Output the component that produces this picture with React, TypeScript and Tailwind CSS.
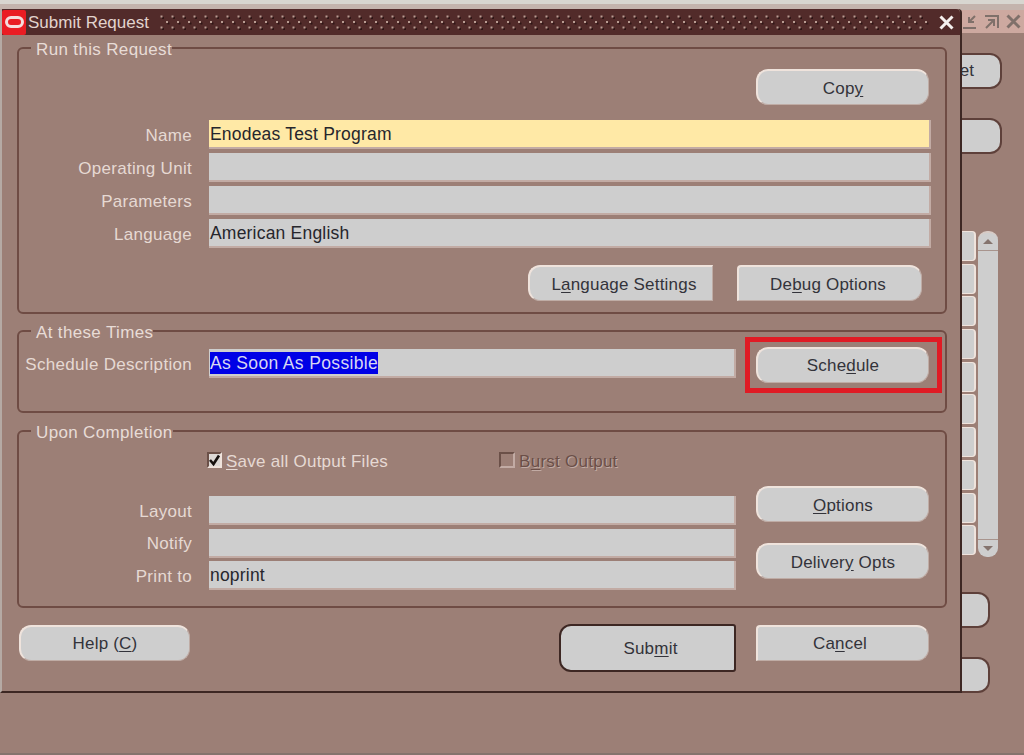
import type { ReactNode } from "react";

const font = { fontFamily: '"Liberation Sans", Arial, sans-serif' };

const U = ({ children }: { children: ReactNode }) => <u className="underline-offset-2">{children}</u>;

const Btn = ({
  children,
  w = "w-[173px]",
  round = "rounded-[12px]",
  inner = "",
}: {
  children: ReactNode;
  w?: string;
  round?: string;
  inner?: string;
}) => (
  <div
    className={`flex h-[36px] shrink-0 items-center justify-center border-t-2 border-r border-b border-l-2 border-t-[#efe3dc] border-r-[#bfaca5] border-b-[#bfaca5] border-l-[#efe3dc] bg-[#cecece] text-[17px] tracking-[0.2px] text-[#33333a] ${w} ${round} ${inner}`}
  >
    {children}
  </div>
);

const Field = ({ children, bg = "bg-[#cecece]", w = "w-[527px]" }: { children?: ReactNode; bg?: string; w?: string }) => (
  <div
    className={`flex h-[29px] items-center border-r-2 border-b-2 border-r-[#c2aba4] border-b-[#c2aba4] pt-[1px] pl-[1px] text-[17.5px] tracking-[0.2px] text-[#26262c] ${bg} ${w}`}
  >
    {children}
  </div>
);

const Label = ({ children }: { children: ReactNode }) => (
  <div className="w-[173px] pt-[2px] text-right text-[17px] tracking-[0.3px] text-[#e6d9d3]">{children}</div>
);

const Row = ({ label, children }: { label: string; children: ReactNode }) => (
  <div className="flex items-center gap-[17px]">
    <Label>{label}</Label>
    {children}
  </div>
);

const Group = ({ title, className = "", children }: { title: string; className?: string; children: ReactNode }) => (
  <div className={`relative ml-[15px] w-[930px] rounded-[6px] border-2 border-[#6f4c44] ${className}`}>
    <span className="absolute top-[-9px] left-[12px] bg-[#9c7f76] pl-[5px] text-[17px] leading-[20px] tracking-[0.35px] text-[#e8dcd6]">
      {title}
    </span>
    {children}
  </div>
);

const Dots = () => (
  <svg className="ml-[10px] h-[16px] min-w-0 flex-1" aria-hidden="true">
    <defs>
      <pattern id="dots" width="11" height="16" patternUnits="userSpaceOnUse">
        <rect x="3" y="3" width="2" height="2" fill="#2f1616" />
        <rect x="8.5" y="8.5" width="2" height="2" fill="#2f1616" />
        <rect x="3" y="14" width="2" height="2" fill="#2f1616" />
        <rect x="1.5" y="1.5" width="2" height="2" fill="#b89c92" />
        <rect x="7" y="7" width="2" height="2" fill="#b89c92" />
        <rect x="1.5" y="12.5" width="2" height="2" fill="#b89c92" />
      </pattern>
    </defs>
    <rect width="100%" height="100%" fill="url(#dots)" />
  </svg>
);

const BackRows = () => (
  <div className="absolute top-[231px] left-[961px] flex w-[15px] flex-col gap-[2.7px]">
    {Array.from({ length: 10 }).map((_, i) => (
      <div key={i} className="h-[30px] rounded-r-[4px] border-t border-r-2 border-b border-[#efe3dc] bg-[#cecece]" />
    ))}
  </div>
);

export default function App() {
  return (
    <div className="relative h-[755px] w-[1024px] overflow-hidden bg-[#9c7f76]" style={font}>
      <div className="h-[4px] bg-[#d8d6d0]" />
      <div className="h-[6px] bg-[#c4b4ad]" />

      {/* parent window, mostly hidden behind the dialog */}
      <div className="absolute top-[10px] right-0 flex h-[23px] w-[70px] items-center justify-end gap-[7px] bg-[#cda9a0] pr-[3px]">
        <svg width="15" height="15" viewBox="0 0 15 15" fill="none" stroke="#7f706a" strokeWidth="2">
          <path d="M1 14h13M13 2 7 8M7 3v5h5" />
        </svg>
        <svg width="15" height="15" viewBox="0 0 15 15" fill="none" stroke="#7f706a" strokeWidth="2">
          <path d="M1 2h13v12M2 14l7-7M4 6h6v6" />
        </svg>
        <svg width="15" height="15" viewBox="0 0 15 15" fill="none" stroke="#7f706a" strokeWidth="3">
          <path d="m1.5 1.5 12 12M13.5 1.5l-12 12" />
        </svg>
      </div>
      <div className="absolute top-[53px] left-[940px] flex h-[36px] w-[62px] items-center justify-end rounded-r-[12px] border-2 border-l-0 border-[#5e403a] bg-[#cecece] pr-[26px] text-[17px] text-[#33333a]">
        et
      </div>
      <div className="absolute top-[118px] left-[940px] h-[36px] w-[62px] rounded-r-[12px] border-2 border-l-0 border-[#5e403a] bg-[#cecece]" />
      <BackRows />
      <div className="absolute top-[231px] left-[978px] flex h-[326px] w-[20px] flex-col justify-between rounded-[9px] border-t-2 border-[#d8cbc5] bg-[#cecece]">
        <div className="flex h-[18px] items-center justify-center border-b border-[#a8948d]">
          <div className="h-0 w-0 border-x-[5px] border-b-[5px] border-x-transparent border-b-[#85746e]" />
        </div>
        <div className="flex h-[18px] items-center justify-center border-t border-[#a8948d]">
          <div className="h-0 w-0 border-x-[5px] border-t-[5px] border-x-transparent border-t-[#85746e]" />
        </div>
      </div>
      <div className="absolute top-[592px] left-[940px] h-[36px] w-[50px] rounded-r-[12px] border-2 border-l-0 border-[#5e403a] bg-[#cecece]" />
      <div className="absolute top-[657px] left-[940px] h-[36px] w-[50px] rounded-r-[12px] border-2 border-l-0 border-[#5e403a] bg-[#cecece]" />
      <div className="absolute top-[753px] left-0 h-[2px] w-full bg-[#85736d]" />

      {/* dialog */}
      <div className="absolute top-[9px] left-0 h-[684px] w-[962px] rounded-tr-[4px] border-r-2 border-b-2 border-l-2 border-r-[#3d2723] border-b-[#3d2723] border-l-[#b5aaa4] bg-[#9c7f76]">
        <div className="flex h-[26px] items-center rounded-tr-[4px] bg-[#522b2a] pr-[6px]">
          <div className="flex h-[25px] w-[24px] shrink-0 items-center justify-center rounded-[2px] bg-[#ea1c23]">
            <div className="h-[12px] w-[19px] rounded-[6px] border-[3px] border-[#f6dcdc]" />
          </div>
          <span className="mt-[2px] ml-[2px] text-[17px] text-[#e2d3cd]">Submit Request</span>
          <Dots />
          <svg className="ml-[10px]" width="15" height="15" viewBox="0 0 15 15" stroke="#f5f0ee" strokeWidth="3">
            <path d="m1.5 1.5 12 12M13.5 1.5l-12 12" />
          </svg>
        </div>

        <Group title="Run this Request" className="mt-[12px] h-[267px]">
          <div className="flex justify-end pt-[20px] pr-[16px]">
            <Btn inner="pt-[2px]">
              <span>
                Cop<U>y</U>
              </span>
            </Btn>
          </div>
          <div className="mt-[15px] flex flex-col gap-[4px]">
            <Row label="Name">
              <Field w="w-[722px]" bg="bg-[#ffe9a6]">
                Enodeas Test Program
              </Field>
            </Row>
            <Row label="Operating Unit">
              <Field w="w-[722px]" />
            </Row>
            <Row label="Parameters">
              <Field w="w-[722px]" />
            </Row>
            <Row label="Language">
              <Field w="w-[722px]">American English</Field>
            </Row>
          </div>
          <div className="mt-[17px] flex justify-end gap-[24px] pr-[23px]">
            <Btn w="w-[185px]" round="rounded-l-[12px]" inner="pt-[2px] pl-[6px]">
              <span>
                L<U>a</U>nguage Settings
              </span>
            </Btn>
            <Btn w="w-[185px]" round="rounded-tl-[4px] rounded-r-[12px]" inner="pt-[2px] pr-[4px]">
              <span>
                De<U>b</U>ug Options
              </span>
            </Btn>
          </div>
        </Group>

        <Group title="At these Times" className="mt-[16px] h-[83px]">
          <div className="flex items-start">
            <div className="mt-[17px]">
              <Row label="Schedule Description">
                <Field>
                  <span className="bg-[#0000e6] leading-[22px] tracking-[0.35px] text-[#d7d7f2]">As Soon As Possible</span>
                </Field>
              </Row>
            </div>
            <div className="mt-[5px] ml-[9px] flex h-[56px] w-[197px] items-center justify-center border-[5px] border-[#e01b24] pr-[2px]">
              <Btn>
                <span>
                  Sche<U>d</U>ule
                </span>
              </Btn>
            </div>
          </div>
        </Group>

        <Group title="Upon Completion" className="mt-[17px] h-[178px]">
          <div className="mt-[16px] flex h-[24px] items-center pl-[188px] text-[17px] tracking-[0.25px]">
            <div className="flex h-[16px] w-[15px] items-center justify-center border-2 border-[#6b5048] border-r-[#efe3dc] border-b-[#efe3dc] bg-[#ded9d6]">
              <svg width="13" height="13" viewBox="0 0 13 13" fill="none" stroke="#17110f" strokeWidth="2.6" className="shrink-0">
                <path d="m2 6 3.5 4L11 1.5" />
              </svg>
            </div>
            <span className="mt-[3px] ml-[4px] text-[#e6d9d3]">
              <U>S</U>ave all Output Files
            </span>
            <div className="ml-[111px] h-[16px] w-[16px] border-2 border-[#6b5048] border-r-[#c2aba4] border-b-[#c2aba4]" />
            <span className="mt-[3px] ml-[4px] text-[#6b4f48] [text-shadow:1px_1px_0_#c2aba4]">
              B<U>u</U>rst Output
            </span>
          </div>
          <div className="flex">
            <div className="mt-[24px] flex flex-col gap-[3.5px]">
              <Row label="Layout">
                <Field />
              </Row>
              <Row label="Notify">
                <Field />
              </Row>
              <Row label="Print to">
                <Field>
                  <span className="mt-[1px]">noprint</span>
                </Field>
              </Row>
            </div>
            <div className="mt-[14px] ml-[20px] flex flex-col gap-[21px]">
              <Btn inner="pt-[2px]">
                <span>
                  <U>O</U>ptions
                </span>
              </Btn>
              <Btn inner="pt-[2px]">
                <span>
                  Deliver<U>y</U> Opts
                </span>
              </Btn>
            </div>
          </div>
        </Group>

        <div className="mt-[16px] flex items-start pl-[17px]">
          <div className="mt-[1px]">
            <Btn w="w-[171px]">
              <span>
                Help (<U>C</U>)
              </span>
            </Btn>
          </div>
          <div className="ml-[369px] flex h-[48px] w-[177px] items-center justify-center rounded-tl-[12px] rounded-r-[3px] rounded-bl-[12px] border-2 border-[#3d2723] bg-[#cecece] pt-[2px] pl-[6px] text-[17px] tracking-[0.2px] text-[#33333a]">
            <span>
              Sub<U>m</U>it
            </span>
          </div>
          <div className="mt-[1px] ml-[20px]">
            <Btn round="rounded-tl-[4px] rounded-r-[12px]" inner="pr-[6px]">
              <span>
                Ca<U>n</U>cel
              </span>
            </Btn>
          </div>
        </div>
      </div>
    </div>
  );
}
